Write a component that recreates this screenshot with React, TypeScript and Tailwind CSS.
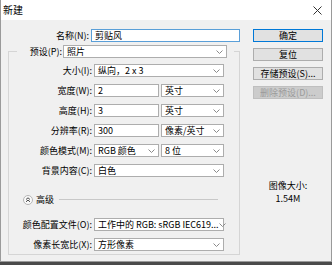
import React from "react";

function Chevron() {
  return (
    <svg width="7" height="4" viewBox="0 0 7 4" className="shrink-0">
      <polyline points="0.5,0.5 3.5,3.5 6.5,0.5" fill="none" stroke="#8a8a8a" strokeWidth="1" />
    </svg>
  );
}

function Select({ text, w }: { text: string; w: string }) {
  return (
    <div className={`flex items-center justify-between h-[13px] border border-[#adadad] bg-white pl-[3px] pr-[3px] ${w}`}>
      <span className="leading-none whitespace-nowrap">{text}</span>
      <Chevron />
    </div>
  );
}

function Input({ text, w, focus }: { text: string; w: string; focus?: boolean }) {
  return (
    <div className={`flex items-center h-[13px] border bg-white pl-[3px] ${focus ? "border-[#5a9fd8]" : "border-[#adadad]"} ${w}`}>
      <span className="leading-none whitespace-nowrap">{text}</span>
    </div>
  );
}

function Label({ text }: { text: string }) {
  return <div className="w-[83px] text-right leading-none whitespace-nowrap">{text}</div>;
}

function Row({ label, children, className = "" }: { label: string; children: React.ReactNode; className?: string }) {
  return (
    <div className={`flex items-center h-[13px] ${className}`}>
      <Label text={label} />
      <div className="ml-[2px] flex gap-[2px]">{children}</div>
    </div>
  );
}

function Button({ text, primary, disabled }: { text: string; primary?: boolean; disabled?: boolean }) {
  const cls = disabled
    ? "bg-[#cccccc] border-[#bfbfbf] text-[#9a9a9a]"
    : primary
    ? "bg-[#e1e1e1] border-[#0078d7] text-black"
    : "bg-[#e1e1e1] border-[#adadad] text-black";
  return (
    <div className={`flex items-center justify-center h-[13px] w-[70px] border ${cls}`}>
      <span className="leading-none whitespace-nowrap">{text}</span>
    </div>
  );
}

export default function App() {
  return (
    <div className="w-[332px] h-[265px] bg-[#4a4a4a] font-['Noto_Sans_CJK_SC',sans-serif] text-[9px] text-black">
      <div className="w-[332px] h-[262px] bg-[#f0f0f0] border-x border-b border-[#9a9a9a] flex flex-col">
        {/* title bar */}
        <div className="h-[20px] bg-white flex items-center justify-between pl-[2px] pr-[9px]">
          <span className="text-[10px] leading-none">新建</span>
          <svg width="9" height="9" viewBox="0 0 9 9">
            <line x1="0.5" y1="0.5" x2="8.5" y2="8.5" stroke="#333" strokeWidth="1" />
            <line x1="8.5" y1="0.5" x2="0.5" y2="8.5" stroke="#333" strokeWidth="1" />
          </svg>
        </div>
        {/* body */}
        <div className="flex pt-[9px] pl-[7px]">
          <div className="flex flex-col w-[232px]">
            <div className="flex items-center h-[13px]">
              <div className="w-[84px] text-right leading-none whitespace-nowrap">名称(N):</div>
              <div className="ml-[2px]">
                <Input text="剪贴风" w="w-[149px]" focus />
              </div>
            </div>
            <fieldset className="mt-[3px] border border-[#d5d5d5] w-[232px] pb-[3px]">
              <legend className="ml-[8px] pr-[7px] flex items-center h-[13px]">
                <div className="w-[46px] pr-[1px] text-right leading-none whitespace-nowrap">预设(P):</div>
                <Select text="照片" w="w-[164px]" />
              </legend>
              <Row label="大小(I):" className="mt-[6px]">
                <Select text="纵向，2 x 3" w="w-[130px]" />
              </Row>
              <Row label="宽度(W):" className="mt-[7px]">
                <Input text="2" w="w-[65px]" />
                <Select text="英寸" w="w-[63px]" />
              </Row>
              <Row label="高度(H):" className="mt-[7px]">
                <Input text="3" w="w-[65px]" />
                <Select text="英寸" w="w-[63px]" />
              </Row>
              <Row label="分辨率(R):" className="mt-[7px]">
                <Input text="300" w="w-[65px]" />
                <Select text="像素/英寸" w="w-[63px]" />
              </Row>
              <Row label="颜色模式(M):" className="mt-[7px]">
                <Select text="RGB 颜色" w="w-[65px]" />
                <Select text="8 位" w="w-[63px]" />
              </Row>
              <Row label="背景内容(C):" className="mt-[7px]">
                <Select text="白色" w="w-[130px]" />
              </Row>
              <div className="flex items-center h-[13px] mt-[16px] pl-[14px] pr-[21px]">
                <svg width="10" height="10" viewBox="0 0 10 10" className="shrink-0">
                  <circle cx="5" cy="5" r="4.5" fill="#fafafa" stroke="#b5b5b5" strokeWidth="1" />
                  <polyline points="3,4.5 5,2.8 7,4.5" fill="none" stroke="#333" strokeWidth="0.9" />
                  <polyline points="3,6.8 5,5.1 7,6.8" fill="none" stroke="#333" strokeWidth="0.9" />
                </svg>
                <span className="ml-[3px] leading-none">高级</span>
                <div className="ml-[5px] flex-1 h-px bg-[#c8c8c8]" />
              </div>
              <Row label="颜色配置文件(O):" className="mt-[12px]">
                <Select text="工作中的 RGB: sRGB IEC619..." w="w-[130px]" />
              </Row>
              <Row label="像素长宽比(X):" className="mt-[7px]">
                <Select text="方形像素" w="w-[130px]" />
              </Row>
            </fieldset>
          </div>
          <div className="ml-[13px] flex flex-col w-[70px]">
            <div className="flex flex-col gap-[6px]">
              <Button text="确定" primary />
              <Button text="复位" />
              <Button text="存储预设(S)..." />
              <Button text="删除预设(D)..." disabled />
            </div>
            <div className="mt-[81px] flex flex-col items-center gap-[1px]">
              <span className="leading-[12px]">图像大小:</span>
              <span className="leading-[12px]">1.54M</span>
            </div>
          </div>
        </div>
      </div>
    </div>
  );
}
